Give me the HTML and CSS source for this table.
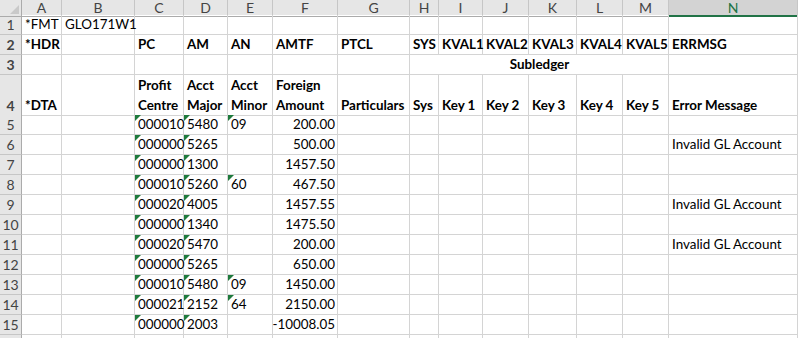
FILE: index.html
```html
<!DOCTYPE html>
<html lang="en">

<head>
  <meta charset="UTF-8" />
  <title>GLO171W1</title>
  <link rel="stylesheet" href="styles.css">
</head>

<body>
  <div class="sheet">
    <div class="row col-heads">
      <div class="corner"></div>
      <div class="ch">A</div><div class="ch">B</div><div class="ch">C</div><div class="ch">D</div><div class="ch">E</div>
      <div class="ch">F</div><div class="ch">G</div><div class="ch">H</div><div class="ch">I</div><div class="ch">J</div>
      <div class="ch">K</div><div class="ch">L</div><div class="ch">M</div><div class="ch selected">N</div>
    </div>

    <div class="row">
      <div class="rh">1</div>
      <div class="c">*FMT</div><div class="c">GLO171W1</div><div class="c"></div><div class="c"></div><div class="c"></div>
      <div class="c"></div><div class="c"></div><div class="c"></div><div class="c"></div><div class="c"></div>
      <div class="c"></div><div class="c"></div><div class="c"></div><div class="c"></div>
    </div>

    <div class="row bold">
      <div class="rh">2</div>
      <div class="c">*HDR</div><div class="c"></div><div class="c">PC</div><div class="c">AM</div><div class="c">AN</div>
      <div class="c">AMTF</div><div class="c">PTCL</div><div class="c">SYS</div><div class="c">KVAL1</div><div class="c">KVAL2</div>
      <div class="c">KVAL3</div><div class="c">KVAL4</div><div class="c">KVAL5</div><div class="c">ERRMSG</div>
    </div>

    <div class="row bold">
      <div class="rh">3</div>
      <div class="c"></div><div class="c"></div><div class="c"></div><div class="c"></div><div class="c"></div>
      <div class="c"></div><div class="c"></div>
      <div class="c merged">Subledger</div>
      <div class="c"></div>
    </div>

    <div class="row tall bold">
      <div class="rh">4</div>
      <div class="c">*DTA</div><div class="c"></div><div class="c">Profit Centre</div><div class="c">Acct Major</div><div class="c">Acct Minor</div>
      <div class="c">Foreign Amount</div><div class="c">Particulars</div><div class="c">Sys</div><div class="c">Key 1</div><div class="c">Key 2</div>
      <div class="c">Key 3</div><div class="c">Key 4</div><div class="c">Key 5</div><div class="c">Error Message</div>
    </div>

    <div class="row">
      <div class="rh">5</div>
      <div class="c"></div><div class="c"></div><div class="c txt">000010</div><div class="c txt">5480</div><div class="c txt">09</div>
      <div class="c num">200.00</div><div class="c"></div><div class="c"></div><div class="c"></div><div class="c"></div>
      <div class="c"></div><div class="c"></div><div class="c"></div><div class="c"></div>
    </div>

    <div class="row">
      <div class="rh">6</div>
      <div class="c"></div><div class="c"></div><div class="c txt">000000</div><div class="c txt">5265</div><div class="c"></div>
      <div class="c num">500.00</div><div class="c"></div><div class="c"></div><div class="c"></div><div class="c"></div>
      <div class="c"></div><div class="c"></div><div class="c"></div><div class="c">Invalid GL Account</div>
    </div>

    <div class="row">
      <div class="rh">7</div>
      <div class="c"></div><div class="c"></div><div class="c txt">000000</div><div class="c txt">1300</div><div class="c"></div>
      <div class="c num">1457.50</div><div class="c"></div><div class="c"></div><div class="c"></div><div class="c"></div>
      <div class="c"></div><div class="c"></div><div class="c"></div><div class="c"></div>
    </div>

    <div class="row">
      <div class="rh">8</div>
      <div class="c"></div><div class="c"></div><div class="c txt">000010</div><div class="c txt">5260</div><div class="c txt">60</div>
      <div class="c num">467.50</div><div class="c"></div><div class="c"></div><div class="c"></div><div class="c"></div>
      <div class="c"></div><div class="c"></div><div class="c"></div><div class="c"></div>
    </div>

    <div class="row">
      <div class="rh">9</div>
      <div class="c"></div><div class="c"></div><div class="c txt">000020</div><div class="c txt">4005</div><div class="c"></div>
      <div class="c num">1457.55</div><div class="c"></div><div class="c"></div><div class="c"></div><div class="c"></div>
      <div class="c"></div><div class="c"></div><div class="c"></div><div class="c">Invalid GL Account</div>
    </div>

    <div class="row">
      <div class="rh">10</div>
      <div class="c"></div><div class="c"></div><div class="c txt">000000</div><div class="c txt">1340</div><div class="c"></div>
      <div class="c num">1475.50</div><div class="c"></div><div class="c"></div><div class="c"></div><div class="c"></div>
      <div class="c"></div><div class="c"></div><div class="c"></div><div class="c"></div>
    </div>

    <div class="row">
      <div class="rh">11</div>
      <div class="c"></div><div class="c"></div><div class="c txt">000020</div><div class="c txt">5470</div><div class="c"></div>
      <div class="c num">200.00</div><div class="c"></div><div class="c"></div><div class="c"></div><div class="c"></div>
      <div class="c"></div><div class="c"></div><div class="c"></div><div class="c">Invalid GL Account</div>
    </div>

    <div class="row">
      <div class="rh">12</div>
      <div class="c"></div><div class="c"></div><div class="c txt">000000</div><div class="c txt">5265</div><div class="c"></div>
      <div class="c num">650.00</div><div class="c"></div><div class="c"></div><div class="c"></div><div class="c"></div>
      <div class="c"></div><div class="c"></div><div class="c"></div><div class="c"></div>
    </div>

    <div class="row">
      <div class="rh">13</div>
      <div class="c"></div><div class="c"></div><div class="c txt">000010</div><div class="c txt">5480</div><div class="c txt">09</div>
      <div class="c num">1450.00</div><div class="c"></div><div class="c"></div><div class="c"></div><div class="c"></div>
      <div class="c"></div><div class="c"></div><div class="c"></div><div class="c"></div>
    </div>

    <div class="row">
      <div class="rh">14</div>
      <div class="c"></div><div class="c"></div><div class="c txt">000021</div><div class="c txt">2152</div><div class="c txt">64</div>
      <div class="c num">2150.00</div><div class="c"></div><div class="c"></div><div class="c"></div><div class="c"></div>
      <div class="c"></div><div class="c"></div><div class="c"></div><div class="c"></div>
    </div>

    <div class="row">
      <div class="rh">15</div>
      <div class="c"></div><div class="c"></div><div class="c txt">000000</div><div class="c txt">2003</div><div class="c"></div>
      <div class="c num">-10008.05</div><div class="c"></div><div class="c"></div><div class="c"></div><div class="c"></div>
      <div class="c"></div><div class="c"></div><div class="c"></div><div class="c"></div>
    </div>

    <!-- top sliver of row 16 -->
    <div class="row stub">
      <div class="rh"></div>
      <div class="c"></div><div class="c"></div><div class="c"></div><div class="c"></div><div class="c"></div>
      <div class="c"></div><div class="c"></div><div class="c"></div><div class="c"></div><div class="c"></div>
      <div class="c"></div><div class="c"></div><div class="c"></div><div class="c"></div>
    </div>
  </div>
</body>

</html>
```

FILE: styles.css
```css
html,
body {
  margin: 0;
  padding: 0;
  background: #fff;
  overflow: hidden;
}

body {
  font-family: Lato, "Liberation Sans", sans-serif;
  font-size: 13.4px;
  color: #000;
}

.sheet {
  width: 798px;
}

/* every row shares the same column widths */
.row {
  display: grid;
  grid-template-columns: 22px 40px 73px 49px 44px 45px 65px 72px 29px 44px 46px 48px 46px 46px 129px;
  height: 20px;
}

.row.tall {
  height: 40px;
}

.row.stub {
  height: 3px;
}

.row.bold {
  font-weight: bold;
}

/* column letters */
.col-heads {
  height: 15px;
  background: #e6e6e6;
  color: #444;
  font-size: 14px;
  line-height: 15px;
}

.corner {
  position: relative;
  border-right: 1px solid #ababab;
  border-bottom: 1px solid #ababab;
  box-sizing: border-box;
}

.corner::after {
  content: "";
  position: absolute;
  right: 2px;
  bottom: 2px;
  border-left: 9px solid transparent;
  border-bottom: 9px solid #c9c9c9;
}

.ch {
  box-sizing: border-box;
  border-right: 1px solid #c6c6c6;
  border-bottom: 1px solid #ababab;
  text-align: center;
}

.ch.selected {
  background: #d3d3d3;
  color: #217346;
  border-bottom: 2px solid #217346;
}

/* row numbers */
.rh {
  box-sizing: border-box;
  background: #e6e6e6;
  color: #444;
  border-right: 1px solid #ababab;
  border-bottom: 1px solid #c6c6c6;
  font-size: 14px;
  display: flex;
  align-items: flex-end;
  justify-content: center;
  line-height: 19px;
}

/* cells */
.c {
  position: relative;
  box-sizing: border-box;
  border-right: 1px solid #d4d4d4;
  border-bottom: 1px solid #d4d4d4;
  padding: 0 2px 0 3px;
  line-height: 19px;
  display: flex;
  align-items: flex-end;
  white-space: nowrap;
}

.stub .c,
.stub .rh {
  border-bottom: 0;
}

.tall .c {
  white-space: normal;
  line-height: 20px;
}

.c.num {
  justify-content: flex-end;
  padding-right: 2px;
}

.c.merged {
  grid-column: span 6;
  justify-content: center;
}

/* number stored as text marker */
.c.txt::before {
  content: "";
  position: absolute;
  top: 0;
  left: 0;
  border-top: 6px solid #1e7a3c;
  border-right: 6px solid transparent;
}
```
